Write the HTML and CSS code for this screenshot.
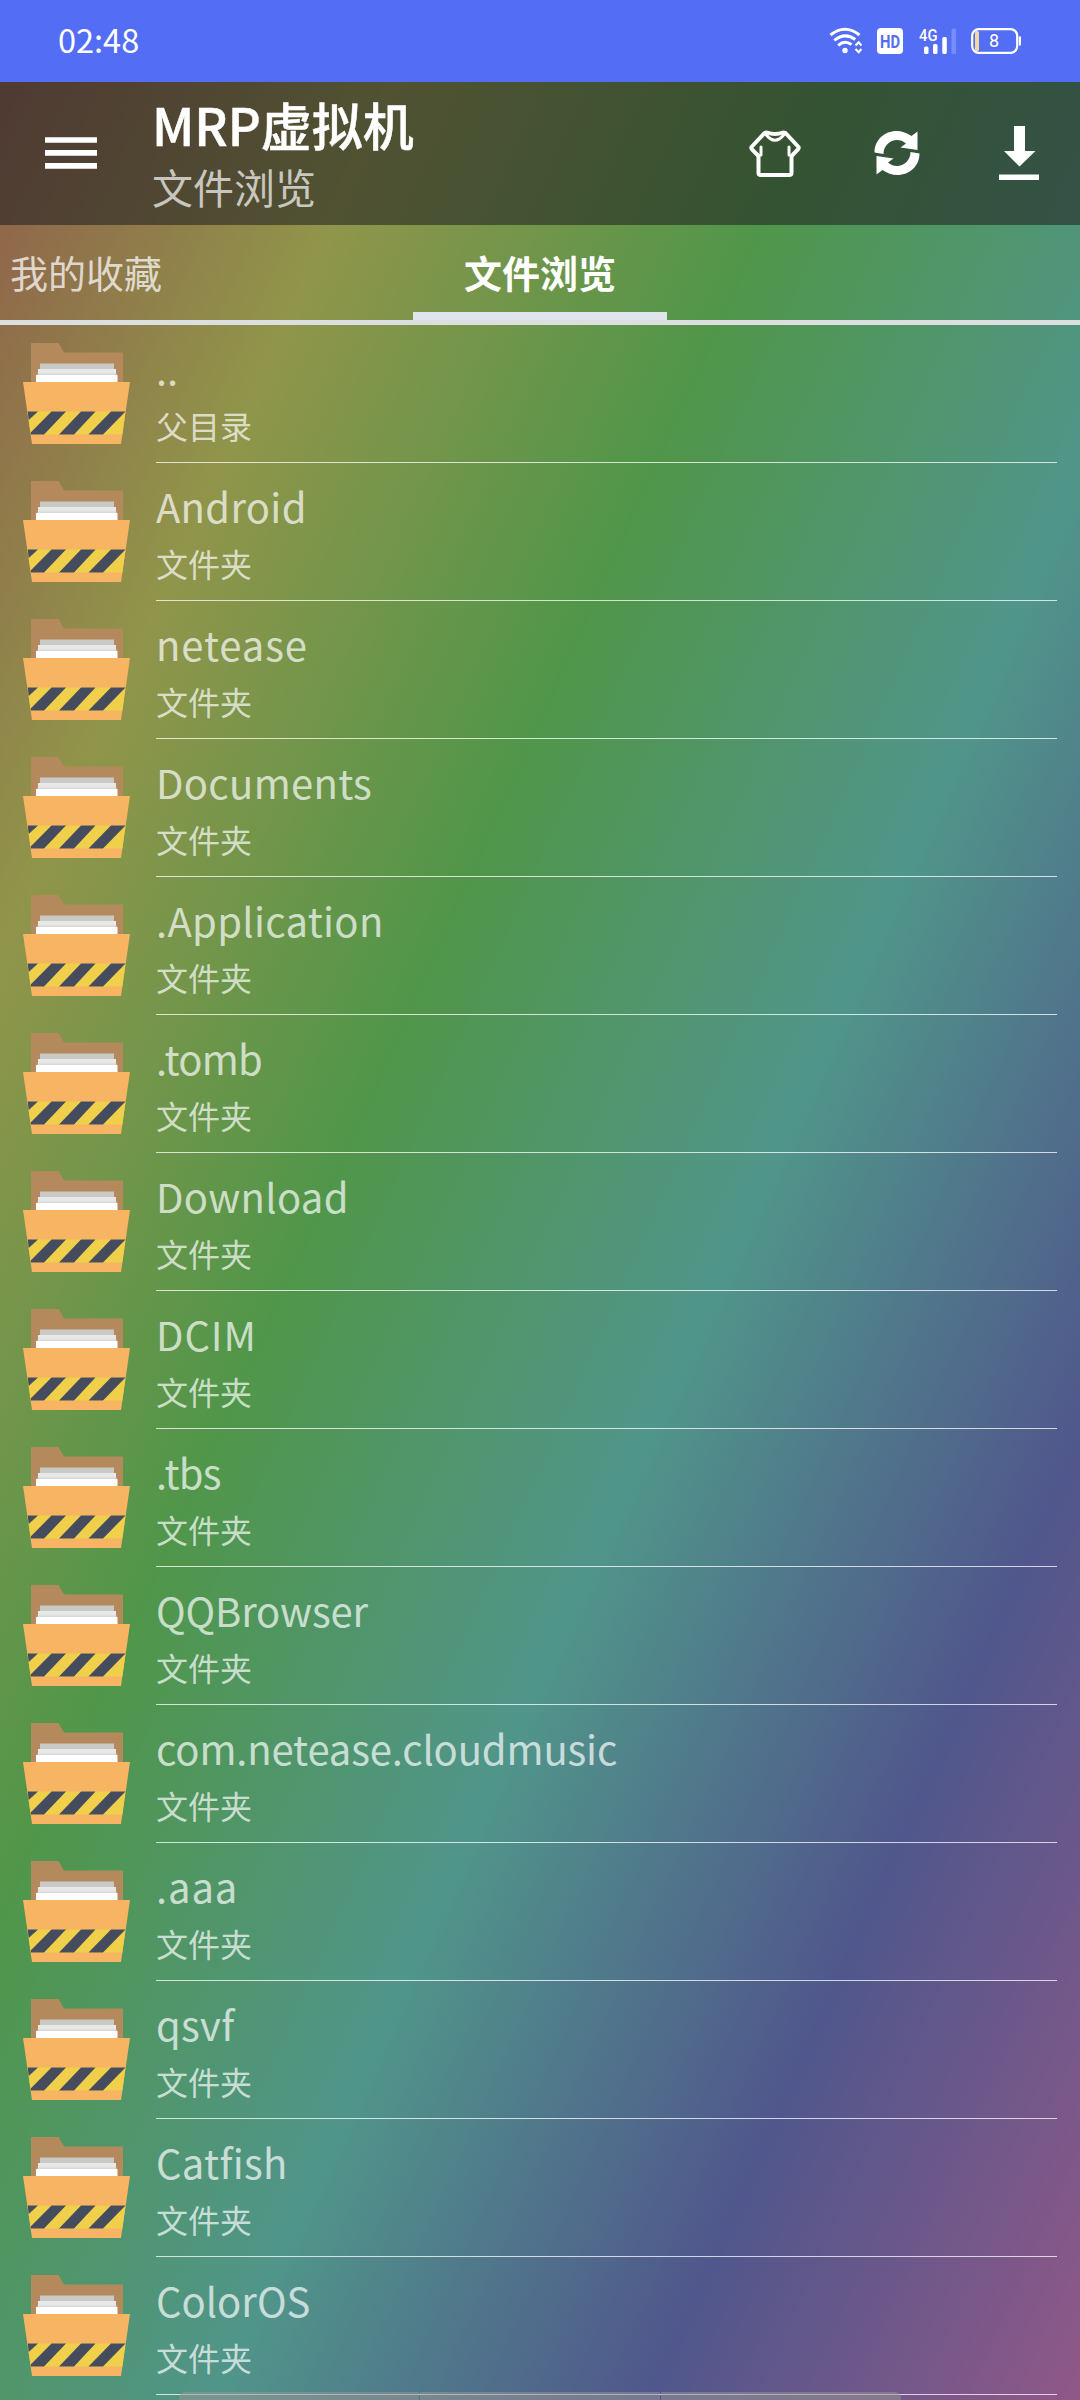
FILE: index.html
```
<!DOCTYPE html>
<html lang="zh-CN">
<head>
<meta charset="utf-8">
<title>MRP虚拟机</title>
<link rel="stylesheet" href="styles.css">
</head>
<body>
<svg class="defs" width="0" height="0">
  <symbol id="folder" viewBox="0 0 108 102">
    <path fill="#b48a5c" d="M8 0H35.500L41 9.500H100V45H8z"/>
    <path fill="#c9cac6" d="M17 20.500H91V30H17z"/>
    <path fill="#e7e9e8" d="M15 26H93V35H15z"/>
    <path fill="#d9d8d6" d="M14.500 30.500H93.500V32H14.500z"/>
    <path fill="#fff" d="M13 32H94.500V42H13z"/>
    <path fill="#f7b462" d="M0 39H107L98 101H9z"/>
    <path fill="#f0d04a" d="M4.500 68.500H102.500L99.300 91.500H7.800z"/>
    <path fill="#454c5e" d="M4.700 68.500H15L5.700 77zM28.500 68.500H43L21 91.500H7.800L7.700 89.500zM58 68.500H72.500L51 91.500H36zM88 68.500H102.500L80 91.500H65.500z"/>
  </symbol>
</svg>
<div class="screen">
  <div class="statusbar">
    <span class="clock">02:48</span>
    <div class="status-icons">
      <svg class="wifi" width="33" height="34" viewBox="0 -3 33 34" fill="none" stroke="#fff">
        <path stroke-width="3" d="M1.500 8Q16 -3.500 30.500 8M5.300 13.300Q16 4.800 26.200 12.500M9.200 18.300Q16 12.500 22.500 17.700"/>
        <circle cx="16" cy="23.500" r="2.700" fill="#fff" stroke="none"/>
        <path stroke-width="2.200" d="M26.500 18.500L29.700 15.300L32.500 18.500M26.500 22L29.700 25.200L32.500 22"/>
      </svg>
      <svg class="hd" width="26" height="34" viewBox="0 -3 26 34">
        <rect y="1" width="26" height="26" rx="4" fill="#fff"/>
        <text x="13" y="20.500" text-anchor="middle" textLength="20" lengthAdjust="spacingAndGlyphs" class="hd-text">HD</text>
      </svg>
      <svg class="signal" width="38" height="34" viewBox="0 -3 38 34" fill="#fff">
        <text x="0" y="14" textLength="18.500" lengthAdjust="spacingAndGlyphs" class="net-text">4G</text>
        <rect x="5" y="19.500" width="4.500" height="7.500" rx="1.500"/>
        <rect x="14" y="17" width="4.500" height="10" rx="1.500"/>
        <rect x="23.300" y="10" width="4.500" height="17" rx="1.500"/>
        <rect x="32.500" y="1.500" width="4.500" height="25.500" rx="1.500" opacity=".22"/>
      </svg>
      <svg class="battery" width="51" height="34" viewBox="0 -3 51 34">
        <rect x="4" y="4" width="4" height="20" rx="1.500" fill="#f2d9a0"/>
        <rect x="1.200" y="2.200" width="45" height="23.600" rx="6.500" fill="none" stroke="#fff" stroke-width="2.200"/>
        <path d="M47.800 9.500H50V18.500H47.800z" fill="#fff"/>
        <text x="23" y="20" text-anchor="middle" class="battery-text">8</text>
      </svg>
    </div>
  </div>
  <header class="appbar">
    <svg class="menu" width="52" height="33" viewBox="0 0 52 33" fill="#fff">
      <path d="M0 .3H52V5.800H0zM0 13.100H52V18.700H0zM0 26.100H52V31.700H0z"/>
    </svg>
    <div class="titles">
      <h1 class="title">MRP虚拟机</h1>
      <p class="subtitle">文件浏览</p>
    </div>
    <div class="actions">
      <svg class="shirt" width="52" height="54" viewBox="0 0 52 54" fill="none" stroke="#fff" stroke-linejoin="round" stroke-linecap="round">
        <path stroke-width="4" d="M15.500 7L2.500 21Q2 22 3 23.300L9.500 30V47Q9.500 49 12 49H40Q42.500 49 42.500 47V30L49 23.300Q50 22 49.500 21L36.500 7L34 6.500Q26 9.500 18 6.500Z"/>
        <path stroke-width="3" d="M17 8.500Q26 20 35 8.500M12 21V29M40 21V29"/>
      </svg>
      <svg class="refresh" width="46" height="54" viewBox="0 0 46 54">
        <path id="half" fill="#fff" d="M.5 26.500C.5 14 10.500 5 22.500 5C28 5 33 7 37.500 10L43.500 5.500V24L26.500 21.500L32 17.500C23 9.500 9.500 16 9.500 28z"/>
        <use href="#half" transform="rotate(180 23 27)"/>
      </svg>
      <svg class="download" width="40" height="54" viewBox="0 0 40 54" fill="#fff">
        <path d="M15 0H26V25H36.500L20.500 40.500L5 25H15zM0 48.500H40V54H0z"/>
      </svg>
    </div>
  </header>
  <nav class="tabs">
    <span class="tab">我的收藏</span>
    <span class="tab tab-active">文件浏览</span>
  </nav>
  <ul class="list">
    <li class="row"><svg class="icon"><use href="#folder"/></svg><div class="info"><span class="name">..</span><span class="kind">父目录</span></div></li>
    <li class="row"><svg class="icon"><use href="#folder"/></svg><div class="info"><span class="name loose">Android</span><span class="kind">文件夹</span></div></li>
    <li class="row"><svg class="icon"><use href="#folder"/></svg><div class="info"><span class="name looser">netease</span><span class="kind">文件夹</span></div></li>
    <li class="row"><svg class="icon"><use href="#folder"/></svg><div class="info"><span class="name loose">Documents</span><span class="kind">文件夹</span></div></li>
    <li class="row"><svg class="icon"><use href="#folder"/></svg><div class="info"><span class="name loose">.Application</span><span class="kind">文件夹</span></div></li>
    <li class="row"><svg class="icon"><use href="#folder"/></svg><div class="info"><span class="name tighter">.tomb</span><span class="kind">文件夹</span></div></li>
    <li class="row"><svg class="icon"><use href="#folder"/></svg><div class="info"><span class="name loose">Download</span><span class="kind">文件夹</span></div></li>
    <li class="row"><svg class="icon"><use href="#folder"/></svg><div class="info"><span class="name looser">DCIM</span><span class="kind">文件夹</span></div></li>
    <li class="row"><svg class="icon"><use href="#folder"/></svg><div class="info"><span class="name tighter">.tbs</span><span class="kind">文件夹</span></div></li>
    <li class="row"><svg class="icon"><use href="#folder"/></svg><div class="info"><span class="name tight">QQBrowser</span><span class="kind">文件夹</span></div></li>
    <li class="row"><svg class="icon"><use href="#folder"/></svg><div class="info"><span class="name tight">com.netease.cloudmusic</span><span class="kind">文件夹</span></div></li>
    <li class="row"><svg class="icon"><use href="#folder"/></svg><div class="info"><span class="name looser">.aaa</span><span class="kind">文件夹</span></div></li>
    <li class="row"><svg class="icon"><use href="#folder"/></svg><div class="info"><span class="name loose">qsvf</span><span class="kind">文件夹</span></div></li>
    <li class="row"><svg class="icon"><use href="#folder"/></svg><div class="info"><span class="name loose">Catfish</span><span class="kind">文件夹</span></div></li>
    <li class="row"><svg class="icon"><use href="#folder"/></svg><div class="info"><span class="name">ColorOS</span><span class="kind">文件夹</span></div></li>
  </ul>
  <div class="navhint"><i></i><i></i><i></i></div>
</div>
</body>
</html>
```
FILE: styles.css
```
* { box-sizing: border-box; }
body { margin: 0; }
.defs { position: absolute; }

.screen {
  position: relative;
  width: 1080px;
  height: 2400px;
  overflow: hidden;
  display: flex;
  flex-direction: column;
  color: #fff;
  font-family: "Noto Sans CJK SC", "Noto Sans", sans-serif;
  background: linear-gradient(to bottom right, #90594b 0%, #90954a 20%, #50964a 40%, #50958a 60%, #50578c 80%, #905888 100%);
}

.statusbar {
  flex: none;
  height: 82px;
  padding: 0 58px;
  display: flex;
  align-items: center;
  justify-content: space-between;
  background: #546df5;
}
.clock { font-size: 32.500px; line-height: 40px; margin-bottom: 5px; }
.status-icons { display: flex; }
.wifi { margin-right: 15px; }
.hd { margin-right: 16px; }
.signal { margin-right: 14px; }
.hd-text { font: 700 18px Roboto, sans-serif; fill: #546df5; }
.net-text { font: 500 17px Roboto, sans-serif; }
.battery-text { font: 400 18px Roboto, sans-serif; fill: #fff; }

.appbar {
  flex: none;
  height: 143px;
  padding: 0 41px 0 45px;
  display: flex;
  align-items: center;
  background: rgba(30, 30, 32, .56);
}
.menu { margin-right: 55px; }
.titles { flex: 1; }
.title { margin: 0; font-size: 51px; line-height: 64px; font-weight: 500; -webkit-text-stroke: .5px #fff; }
.subtitle { margin: 0; font-size: 41px; line-height: 60px; color: rgba(255, 255, 255, .7); }
.actions { display: flex; margin-bottom: 1px; }
.shirt { margin-right: 73px; }
.refresh { margin-right: 79px; }

.tabs {
  flex: none;
  height: 100px;
  border-bottom: 5px solid #dcdfe0;
  display: flex;
  justify-content: space-between;
  font-size: 38px;
  line-height: 93px;
}
.tab { padding-left: 10px; color: rgba(255, 255, 255, .72); }
.tab-active {
  width: 254px;
  height: 95px;
  margin-right: 413px;
  padding: 0;
  border-bottom: 8px solid #e0e4ec;
  text-align: center;
  font-weight: 700;
  color: #fff;
}

.list { margin: 0; padding: 0; list-style: none; }
.row {
  height: 138px;
  padding: 0 23px;
  display: flex;
  align-items: flex-end;
}
.icon { flex: none; width: 108px; height: 102px; margin: 0 25px 18px 0; }
.info {
  flex: 1;
  height: 127px;
  border-bottom: 1px solid rgba(255, 255, 255, .75);
  display: flex;
  flex-direction: column;
  color: rgba(255, 255, 255, .7);
}
.name { height: 64px; font-size: 40px; line-height: 64px; }
.loose { letter-spacing: .3px; }
.looser { letter-spacing: .9px; }
.tight { letter-spacing: -.15px; }
.tighter { letter-spacing: -.7px; }
.kind { font-size: 32px; line-height: 50px; }

.navhint {
  position: absolute;
  left: 179px;
  bottom: 0;
  width: 722px;
  height: 8px;
  display: flex;
  gap: 1px;
  border-radius: 6px 6px 0 0;
  overflow: hidden;
}
.navhint i { flex: 1; background: rgba(150, 150, 150, .55); }
```
